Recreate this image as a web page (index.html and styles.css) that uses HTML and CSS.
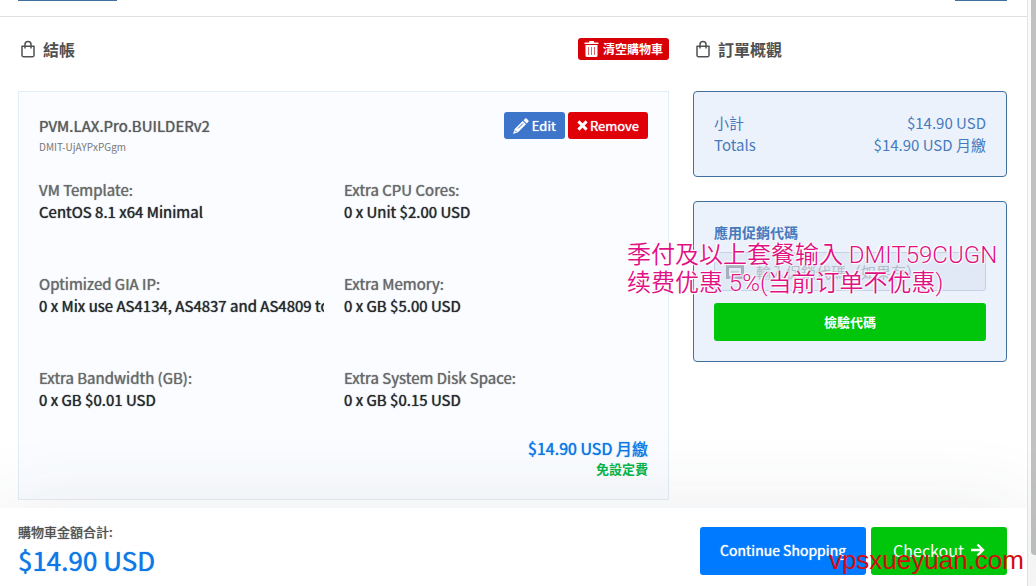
FILE: index.html
```html
<!DOCTYPE html>
<html lang="zh-Hant">
<head>
<meta charset="utf-8">
<meta name="viewport" content="width=device-width, initial-scale=1">
<title>結帳</title>
<link rel="stylesheet" href="styles.css">
</head>
<body>
<svg class="sprite" aria-hidden="true">
  <symbol id="bag" viewBox="0 0 16 18"><path d="M2 6.200h12v9a1.600 1.600 0 0 1-1.600 1.600H3.600A1.600 1.600 0 0 1 2 15.200zM5 8.500V4.600a3 3 0 0 1 6 0v3.900" fill="none" stroke="currentColor" stroke-width="1.500" stroke-linejoin="round"/></symbol>
</svg>
<div class="app">
  <div class="page">
    <header class="topbar"><span class="tab tab-wide"></span><span class="tab"></span></header>
    <main class="content">
      <section class="cart">
        <div class="heading">
          <h1><svg class="bag"><use href="#bag"/></svg>結帳</h1>
          <button class="btn btn-empty" type="button"><svg class="trash" viewBox="0 0 14 16"><path fill="currentColor" d="M4.500 1.500V.8Q4.500 0 5.300 0h3.400q.8 0 .8.800v.7H13.500q.5 0 .5.500v1H0V2q0-.5.5-.5zM1 4h12v10.500q0 1.500-1.500 1.500h-9Q1 16 1 14.500z"/><path d="M4 6v8M7 6v8M10 6v8" stroke="#e0666a" stroke-width="1"/></svg>清空購物車</button>
        </div>
        <article class="card">
          <div class="card-head">
            <div class="product"><h2>PVM.LAX.Pro.BUILDERv2</h2><small>DMIT-UjAYPxPGgm</small></div>
            <div class="actions">
              <button class="btn btn-edit" type="button"><svg class="pencil" viewBox="0 0 16 16"><path fill="currentColor" d="M10.500 2.200 12.200.6q.7-.7 1.400 0l1.800 1.800q.7.7 0 1.400l-1.600 1.700zM9.700 3 13 6.300 5 14.300 0 16l1.700-5z"/><path d="M5 10.500 10 5.500M2 12.500l1.500 1.500" stroke="#3d75cb" fill="none"/></svg>Edit</button>
              <button class="btn btn-remove" type="button"><svg class="cross" viewBox="0 0 12 12"><path d="m1.500 1.500 9 9m0-9-9 9" stroke="currentColor" stroke-width="3.200"/></svg>Remove</button>
            </div>
          </div>
          <dl class="options">
            <div><dt>VM Template:</dt><dd>CentOS 8.1 x64 Minimal</dd></div>
            <div><dt>Extra CPU Cores:</dt><dd>0 x Unit $2.00 USD</dd></div>
            <div><dt>Optimized GIA IP:</dt><dd>0 x Mix use AS4134, AS4837 and AS4809 to CN</dd></div>
            <div><dt>Extra Memory:</dt><dd>0 x GB $5.00 USD</dd></div>
            <div><dt>Extra Bandwidth (GB):</dt><dd>0 x GB $0.01 USD</dd></div>
            <div><dt>Extra System Disk Space:</dt><dd>0 x GB $0.15 USD</dd></div>
          </dl>
          <div class="price"><strong>$14.90 USD 月繳</strong><span>免設定費</span></div>
        </article>
      </section>
      <aside class="summary">
        <div class="heading"><h1><svg class="bag"><use href="#bag"/></svg>訂單概觀</h1></div>
        <dl class="panel totals">
          <div><dt>小計</dt><dd>$14.90 USD</dd></div>
          <div><dt>Totals</dt><dd>$14.90 USD 月繳</dd></div>
        </dl>
        <form class="panel promo">
          <label for="code">應用促銷代碼</label>
          <div class="field">
            <svg class="ticket" viewBox="0 0 18 14"><path fill="none" stroke="currentColor" stroke-width="3" d="M1.500 1.500h15v11h-15z"/><path stroke="currentColor" d="M5 7h8"/></svg>
            <input id="code" type="text" placeholder="輸入促銷代碼（如果有）">
          </div>
          <button class="btn btn-check" type="button">檢驗代碼</button>
          <p class="note">季付及以上套餐输入 DMIT59CUGN<br>续费优惠 5%(当前订单不优惠)</p>
        </form>
      </aside>
    </main>
    <footer class="cartbar">
      <div class="due"><span>購物車金額合計:</span><strong>$14.90 USD</strong></div>
      <div class="cartbar-actions">
        <button class="btn btn-large btn-continue" type="button">Continue Shopping</button>
        <button class="btn btn-large btn-checkout" type="button">Checkout<svg class="arrow" viewBox="0 0 14 14"><path d="M0 7h12M6.500 1.500 12 7l-5.500 5.500" fill="none" stroke="currentColor" stroke-width="2.400"/></svg></button>
      </div>
      <span class="watermark">vpsxueyuan.com</span>
    </footer>
  </div>
  <div class="rail"><div class="thumb"></div></div>
</div>
</body>
</html>
```
FILE: styles.css
```css
* { box-sizing: border-box; }
body, h1, h2, dl, dd, p { margin: 0; }
body {
  font: 400 15px/22px "Noto Sans CJK TC", "Noto Sans CJK SC", sans-serif;
  color: #505050;
  background: #fff;
}
.sprite { position: absolute; width: 0; height: 0; }
svg { flex: none; }
.app { display: flex; height: 100vh; overflow: hidden; }
.page { flex: 1; min-width: 0; display: flex; flex-direction: column; }
.rail { width: 9px; padding-left: 3px; border-left: 1px solid #e5e5e5; background: #fafafa; }
.thumb { height: 555px; background: #c1c1c1; border-radius: 0 0 0 4px; }

.topbar {
  flex: none;
  display: flex;
  justify-content: space-between;
  align-items: flex-start;
  height: 17px;
  padding: 0 20px 0 18px;
  border-bottom: 1px solid #dfdfdf;
}
.tab { width: 52px; height: 1px; background: #41709f; }
.tab-wide { width: 99px; }

.content {
  flex: 1;
  min-height: 0;
  display: grid;
  grid-template-columns: minmax(0, 1fr) 314px;
  align-items: start;
  gap: 24px;
  padding: 20px 20px 0 18px;
}
.heading { display: flex; justify-content: space-between; align-items: flex-start; height: 54px; }
h1 { display: flex; align-items: center; gap: 7px; padding-left: 2px; font-size: 16px; line-height: 24px; font-weight: 700; }
.bag { width: 16px; height: 18px; }

h2, .options, .price strong, .due, .btn-edit, .btn-remove, .btn-continue { text-shadow: 0 0 1px currentColor; }

.btn {
  display: flex;
  align-items: center;
  justify-content: center;
  border: 0;
  border-radius: 3px;
  padding: 0 9px;
  color: #fff;
  font: inherit;
  font-size: 13px;
  white-space: nowrap;
}
.btn-empty { gap: 4px; height: 22px; margin-top: 1px; padding: 0 6px; background: #d80007; font-size: 12px; font-weight: 700; }
.trash { width: 15px; height: 16px; }
.btn-edit { gap: 3px; height: 27px; background: #3d75cb; }
.pencil { width: 16px; height: 16px; }
.btn-remove { gap: 2px; height: 27px; background: #e00008; }
.cross { width: 11px; height: 11px; }

.card { padding: 20px; border: 1px solid #e3edf5; background: #fafcff; }
.card-head { display: flex; justify-content: space-between; height: 67px; }
.product { padding-top: 3px; }
h2 { font-size: 15px; line-height: 22px; font-weight: 400; color: #5c5c5c; }
small { display: block; font-size: 10px; line-height: 20px; color: #777; }
.actions { display: flex; align-items: flex-start; gap: 3px; }
.options { display: grid; grid-template-columns: 1fr 1fr; gap: 50px 20px; padding-right: 19px; }
.options div { min-width: 0; }
.options dt { color: #696969; }
.options dd { overflow: hidden; white-space: nowrap; color: #27292c; }
.price { display: flex; flex-direction: column; align-items: flex-end; padding-top: 26px; }
.price strong { font-size: 16px; font-weight: 400; color: #0f78e6; }
.price span { font-size: 13px; line-height: 20px; font-weight: 700; color: #08b44a; }

.panel { padding: 20px; border: 1px solid #41709f; border-radius: 4px; background: #ecf2fb; color: #477abd; }
.totals { margin-bottom: 24px; }
.totals div { display: flex; justify-content: space-between; }
.promo { position: relative; }
.promo label { display: block; padding-bottom: 10px; font-size: 14px; line-height: 20px; font-weight: 700; }
.field {
  display: flex;
  align-items: center;
  gap: 12px;
  height: 39px;
  margin-bottom: 12px;
  padding-left: 11px;
  border: 1px solid #c5d0e6;
  border-radius: 3px;
  background: #e1e9f6;
  color: #a7afbd;
}
.ticket { width: 18px; height: 14px; }
.field input { flex: 1; min-width: 0; border: 0; padding: 0; background: none; font: inherit; }
.field input::placeholder { color: #b4bac6; }
.btn-check { width: 100%; height: 38px; background: #00c60b; font-weight: 700; }
.note {
  position: absolute;
  top: 39px;
  left: -67px;
  color: #e01184;
  font: 350 24px/28px Roboto, "Noto Sans CJK SC", sans-serif;
  white-space: nowrap;
  text-shadow: 0 0 2px #fff, 0 0 2px #fff, 1px 1px 1px #fff, -1px -1px 1px #fff;
}

.cartbar {
  flex: none;
  position: relative;
  display: flex;
  justify-content: space-between;
  align-items: flex-start;
  height: 78px;
  padding: 14px 20px 0 18px;
  background: #fff;
  box-shadow: 0 0 80px rgba(60, 70, 90, 0.1);
}
.due span { display: block; font-size: 13px; line-height: 20px; }
.due strong { display: block; font-size: 26px; line-height: 36px; font-weight: 400; color: #0f78e6; }
.cartbar-actions { display: flex; gap: 5px; padding-top: 5px; }
.btn-large { height: 48px; padding: 0 20px 2px; font-size: 14px; }
.btn-continue { background: #007bff; }
.btn-checkout { gap: 7px; padding: 0 22px 2px; background: #00c60b; font-size: 16px; }
.arrow { width: 14px; height: 14px; }
.watermark {
  position: absolute;
  right: 3px;
  bottom: 11px;
  color: #d40c10;
  font: 26px/30px "Liberation Sans", sans-serif;
}
```
